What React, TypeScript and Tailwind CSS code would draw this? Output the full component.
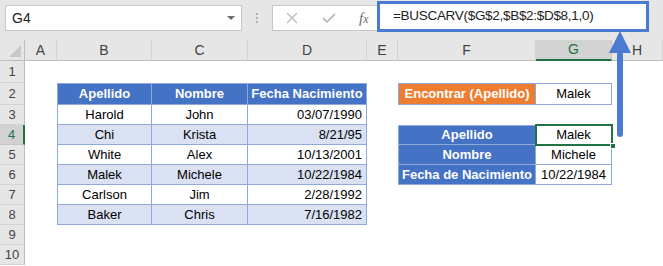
const cols = ["A", "B", "C", "D", "E", "F", "G", "H"];

const people = [
  ["Harold", "John", "03/07/1990"],
  ["Chi", "Krista", "8/21/95"],
  ["White", "Alex", "10/13/2001"],
  ["Malek", "Michele", "10/22/1984"],
  ["Carlson", "Jim", "2/28/1992"],
  ["Baker", "Chris", "7/16/1982"],
];

const lookup = [
  ["Apellido", "Malek"],
  ["Nombre", "Michele"],
  ["Fecha de Nacimiento", "10/22/1984"],
];

function Cell({ className = "", children }: { className?: string; children?: React.ReactNode }) {
  return <div className={`flex items-center overflow-visible whitespace-nowrap ${className}`}>{children}</div>;
}

function leftTable(row: number, col: number) {
  // col 1..3 => B..D, row 2..8
  const edgeL = col === 1 ? "border-l" : "";
  const edgeT = row === 2 ? "border-t" : "";
  const base = `border-r border-b border-[#8eaadb] ${edgeL} ${edgeT}`;
  if (row === 2) {
    const head = ["Apellido", "Nombre", "Fecha Nacimiento"][col - 1];
    return (
      <Cell className={`${base} bg-[#4472c4] text-white font-bold justify-center`}>{head}</Cell>
    );
  }
  const value = people[row - 3][col - 1];
  const bg = row % 2 === 0 ? "bg-[#d9e1f2]" : "bg-white";
  const align = col === 3 ? "justify-end pr-[4px]" : "justify-center";
  return <Cell className={`${base} ${bg} ${align}`}>{value}</Cell>;
}

function rightTable(row: number, col: number) {
  // col 5 => F, col 6 => G
  if (row === 2) {
    if (col === 5)
      return (
        <Cell className="border border-[#8eaadb] bg-[#ed7d31] text-white font-bold justify-center">
          Encontrar (Apellido)
        </Cell>
      );
    return <Cell className="border-y border-r border-[#8eaadb] bg-white justify-center">Malek</Cell>;
  }
  if (row >= 4 && row <= 6) {
    const [label, value] = lookup[row - 4];
    const top = row === 4 ? "border-t" : "";
    if (col === 5)
      return (
        <Cell className={`border-x border-b ${top} border-[#8eaadb] bg-[#4472c4] text-white font-bold justify-center`}>
          {label}
        </Cell>
      );
    if (row === 4)
      return (
        <div className="relative">
          <Cell className="h-full border-r border-b border-t border-[#8eaadb] bg-white justify-center">{value}</Cell>
          <div className="absolute -left-[1px] -top-[1px] w-[78px] h-[22px] border-2 border-[#217346]" />
          <div className="absolute -right-[4px] -bottom-[4px] w-[6px] h-[6px] bg-[#217346] border border-white" />
        </div>
      );
    return <Cell className="border-r border-b border-[#8eaadb] bg-white justify-center">{value}</Cell>;
  }
  return <div />;
}

function bodyCell(row: number, col: number) {
  if (row >= 2 && row <= 8 && col >= 1 && col <= 3) return leftTable(row, col);
  if ((col === 5 || col === 6) && (row === 2 || (row >= 4 && row <= 6))) return rightTable(row, col);
  return <div />;
}

export default function App() {
  const rows = Array.from({ length: 10 }, (_, i) => i + 1);
  return (
    <div
      className="relative w-[663px] h-[266px] overflow-hidden bg-white text-black"
      style={{ fontFamily: '"Liberation Sans", Arial, sans-serif' }}
    >
      {/* formula bar */}
      <div className="h-[40px] bg-[#e6e6e6] flex items-start">
        <div className="ml-[5px] mt-[5px] w-[237px] h-[26px] bg-white border border-[#c6c6c6] flex items-center justify-between pl-[6px] pr-[6px] text-[14px] text-[#222]">
          <span>G4</span>
          <span className="w-0 h-0 border-l-[4px] border-r-[4px] border-t-[4px] border-l-transparent border-r-transparent border-t-[#6b6b6b]" />
        </div>
        <div className="ml-[14px] mt-[13px] flex flex-col gap-[2px]">
          <span className="w-[2px] h-[2px] bg-[#b0b0b0]" />
          <span className="w-[2px] h-[2px] bg-[#b0b0b0]" />
          <span className="w-[2px] h-[2px] bg-[#b0b0b0]" />
        </div>
        <div className="ml-[14px] mt-[5px] w-[112px] h-[26px] bg-white border border-[#c6c6c6] flex items-center pl-[12px]">
          <svg width="14" height="14" viewBox="0 0 14 14" className="text-[#bdbdbd]">
            <path d="M2 2 L12 12 M12 2 L2 12" stroke="currentColor" strokeWidth="1.4" />
          </svg>
          <svg width="16" height="14" viewBox="0 0 16 14" className="ml-[22px] text-[#bdbdbd]">
            <path d="M2 7 L6 11 L14 3" stroke="currentColor" strokeWidth="1.8" fill="none" />
          </svg>
          <span
            className="ml-[22px] text-[15px] italic text-[#6b6b6b]"
            style={{ fontFamily: '"Liberation Serif", serif' }}
          >
            f<span className="text-[12px]">x</span>
          </span>
        </div>
        <div className="-ml-[7px] mt-[1px] w-[272px] h-[31px] bg-white border-[3px] border-[#4a7bd0] flex items-center pl-[13px] text-[13.5px] text-[#222] tracking-[-0.3px]">
          =BUSCARV($G$2,$B$2:$D$8,1,0)
        </div>
      </div>

      {/* sheet */}
      <div className="grid grid-cols-[25px_32px_95px_96px_119px_31px_138px_76px_51px] grid-rows-[21px_22px_22px_repeat(8,20px)] text-[13px]">
        <div className="relative bg-[#e6e6e6] border-r border-b border-[#bdbdbd]">
          <svg className="absolute right-[3px] bottom-[3px]" width="12" height="12" viewBox="0 0 12 12">
            <path d="M12 0 L12 12 L0 12 Z" fill="#c8c8c8" />
          </svg>
        </div>
        {cols.map((c) =>
          c === "G" ? (
            <div
              key={c}
              className="bg-[#d2d2d2] border-r border-[#c6c6c6] border-b-2 border-b-[#217346] flex items-center justify-center text-[14px] text-[#217346]"
            >
              {c}
            </div>
          ) : (
            <div
              key={c}
              className="bg-[#e6e6e6] border-r border-[#d4d4d4] border-b border-b-[#bdbdbd] flex items-center justify-center text-[14px] text-[#444]"
            >
              {c}
            </div>
          )
        )}
        {rows.map((r) => (
          <>
            {r === 4 ? (
              <div
                key={`h${r}`}
                className="bg-[#d2d2d2] border-b border-[#c6c6c6] border-r-2 border-r-[#217346] flex items-center justify-center text-[#217346]"
              >
                {r}
              </div>
            ) : (
              <div
                key={`h${r}`}
                className="bg-[#e6e6e6] border-b border-[#d4d4d4] border-r border-r-[#bdbdbd] flex items-center justify-center text-[#444]"
              >
                {r}
              </div>
            )}
            {cols.map((_, ci) => (
              <div key={`${r}-${ci}`} className="contents">
                {bodyCell(r, ci)}
              </div>
            ))}
          </>
        ))}
      </div>

      {/* arrow from result to formula */}
      <svg className="absolute left-[604px] top-[30px]" width="32" height="110" viewBox="0 0 32 110">
        <path d="M16 1 L27 23 L5 23 Z" fill="#4a7bd0" />
        <rect x="13" y="22" width="6" height="85" rx="3" fill="#4a7bd0" />
      </svg>
    </div>
  );
}
